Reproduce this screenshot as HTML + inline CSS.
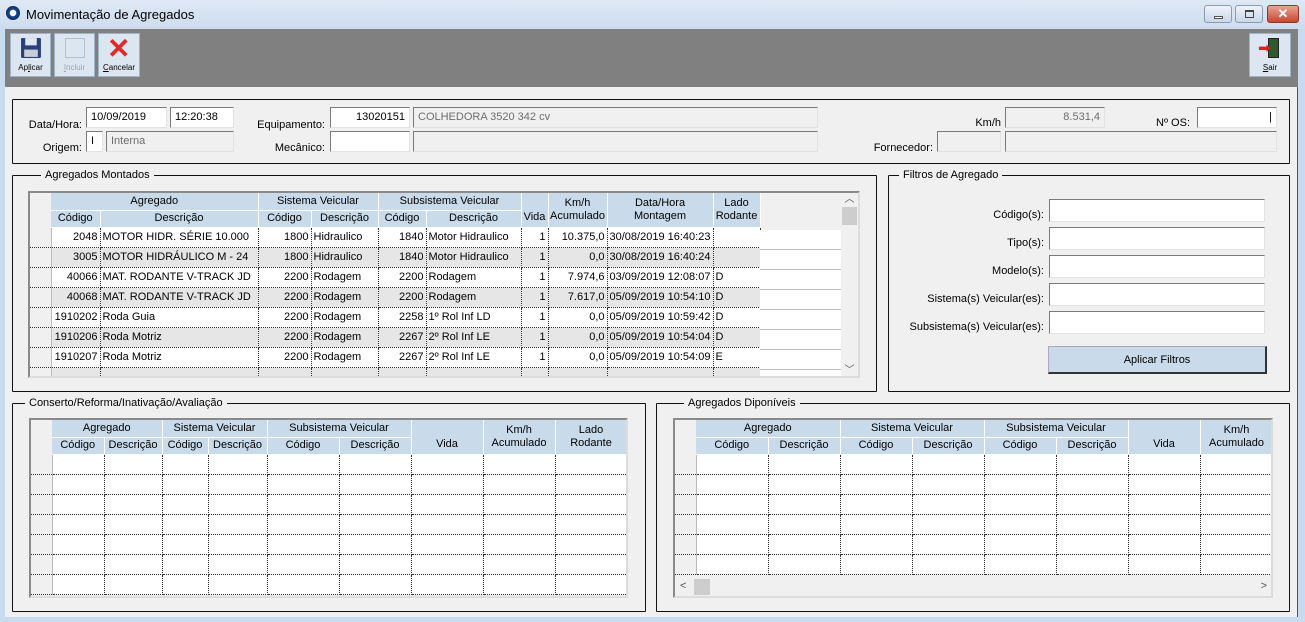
<!DOCTYPE html>
<html><head><meta charset="utf-8">
<style>
*{box-sizing:border-box;margin:0;padding:0}
body{width:1305px;height:622px;overflow:hidden;background:#c9dbee;font-family:"Liberation Sans",Arial,sans-serif;font-size:11px;color:#000;position:relative}
.a{position:absolute}
.title{left:0;top:0;width:1305px;height:29px;background:linear-gradient(#dfe9f5,#cddcee)}
.tb{left:5px;top:29px;width:1293px;height:58px;background:#808080}
.body{left:5px;top:87px;width:1293px;height:530px;background:#f0f0f0;border-right:1px solid #555}
.btn{background:#dce6f0;border:1px solid #9fb4c8;font-size:8px;text-align:center}
.btn span{position:absolute;left:0;right:0;bottom:4px}
.grp{border:1px solid #111;border-radius:1px}
.leg{background:#f0f0f0;padding:0 4px;top:-7px}
.in{background:#fff;border:1px solid #7a7a7a;border-right-color:#e3e3e3;border-bottom-color:#e3e3e3;height:21px;padding:3px 4px;font-size:11px}
.g{background:#f0f0f0;color:#6d6d6d}
.lb{text-align:right}
table{border-collapse:collapse;table-layout:fixed;font-size:11px}
td{height:20px;border-right:1px dotted #333;border-bottom:1px dotted #333;padding:0 2px;white-space:nowrap;overflow:hidden;background:#fff}
td.r{text-align:right}
td.rh{background:#f0f0f0;border-right:1px solid #bbb}
tr.z td{background:#e6e6e6}
tr.z td.rh{background:#f0f0f0}
th{background:#c9dbea;font-weight:normal;height:17px;border-right:1px solid #fff;border-bottom:1px solid #fff;padding:0;white-space:nowrap;overflow:hidden;line-height:13px}
th.rh{background:#f0f0f0;border:none}
.grid{border:2px solid #8a8a8a;border-right-color:#dcdcdc;border-bottom-color:#dcdcdc;overflow:hidden;background:#f0f0f0}
</style></head><body>
<div class="a title"></div>
<div class="a" style="left:6px;top:6px;width:14px;height:14px;border-radius:50%;background:radial-gradient(circle at 50% 50%,#fff 30%,#1c4f8f 35%,#0a2a60 70%)"></div>
<div class="a" style="left:26px;top:7px;font-size:13px">Movimentação de Agregados</div>
<div class="a" style="left:1204px;top:5px;width:28px;height:18px;border:1px solid #8a9ab0;border-radius:3px;background:linear-gradient(#eef3fa,#c9d7e8)"><div class="a" style="left:9px;top:10px;width:9px;height:3px;background:#fff;border:1px solid #555"></div></div>
<div class="a" style="left:1235px;top:5px;width:28px;height:18px;border:1px solid #8a9ab0;border-radius:3px;background:linear-gradient(#eef3fa,#c9d7e8)"><div class="a" style="left:9px;top:4px;width:9px;height:8px;border:1px solid #444;border-top-width:2px"></div></div>
<div class="a" style="left:1267px;top:5px;width:32px;height:18px;border:1px solid #8a3a2a;border-radius:3px;background:linear-gradient(#e8a596,#c8452e);color:#fff;font-weight:bold;text-align:center;line-height:16px;font-size:13px">✕</div>

<div class="a tb"></div>
<div class="a btn" style="left:10px;top:33px;width:41px;height:44px">
<svg class="a" style="left:9px;top:3px" width="22" height="22" viewBox="0 0 21 21"><rect x="1" y="1" width="19" height="19" rx="1" fill="#2b3f7a"/><rect x="5" y="1" width="11" height="7" fill="#dfe6f0"/><rect x="4" y="12" width="13" height="7" fill="#c8cdd6"/></svg><span>Ap<u>l</u>icar</span></div>
<div class="a btn" style="left:54px;top:33px;width:41px;height:44px;color:#9aa">
<div class="a" style="left:10px;top:4px;width:20px;height:20px;border:1px solid #b5c0cc"></div><span><u>I</u>ncluir</span></div>
<div class="a btn" style="left:98px;top:33px;width:42px;height:44px">
<div class="a" style="left:8px;top:1px;font-size:28px;color:#e02828;font-weight:bold;line-height:28px">✕</div><span><u>C</u>ancelar</span></div>
<div class="a btn" style="left:1249px;top:33px;width:42px;height:44px">
<div class="a" style="left:18px;top:4px;width:11px;height:20px;background:#2f5a2a;border:1px solid #222"></div>
<div class="a" style="left:8px;top:9px;font-size:15px;color:#e02020;line-height:12px">➡</div><span><u>S</u>air</span></div>

<div class="a body"></div>

<div class="a grp" style="left:12px;top:99px;width:1278px;height:65px"></div>
<div class="a lb" style="left:20px;top:119px;width:62px">Data/Hora:</div>
<div class="a in" style="left:86px;top:107px;width:81px">10/09/2019</div>
<div class="a in" style="left:170px;top:107px;width:64px">12:20:38</div>
<div class="a lb" style="left:20px;top:142px;width:62px">Origem:</div>
<div class="a in" style="left:86px;top:131px;width:17px">I</div>
<div class="a in g" style="left:106px;top:131px;width:128px">Interna</div>
<div class="a lb" style="left:240px;top:119px;width:85px">Equipamento:</div>
<div class="a in" style="left:330px;top:107px;width:80px;text-align:right">13020151</div>
<div class="a in g" style="left:413px;top:107px;width:405px">COLHEDORA 3520 342 cv</div>
<div class="a lb" style="left:240px;top:142px;width:85px">Mecânico:</div>
<div class="a in" style="left:330px;top:131px;width:80px"></div>
<div class="a in g" style="left:413px;top:131px;width:405px"></div>
<div class="a lb" style="left:950px;top:117px;width:51px">Km/h</div>
<div class="a in g" style="left:1005px;top:107px;width:100px;text-align:right">8.531,4</div>
<div class="a lb" style="left:1130px;top:117px;width:60px">Nº OS:</div>
<div class="a in" style="left:1197px;top:107px;width:80px;text-align:right">|</div>
<div class="a lb" style="left:860px;top:142px;width:73px">Fornecedor:</div>
<div class="a in g" style="left:937px;top:131px;width:64px"></div>
<div class="a in g" style="left:1005px;top:131px;width:272px"></div>

<div class="a grp" style="left:12px;top:175px;width:865px;height:217px"><div class="a leg" style="left:28px">Agregados Montados</div></div>
<div class="a grid" style="left:28px;top:191px;width:832px;height:187px">
<table class="a" style="left:0;top:0;width:730px">
<colgroup><col style="width:21px"><col style="width:49px"><col style="width:158px"><col style="width:53px"><col style="width:67px"><col style="width:48px"><col style="width:95px"><col style="width:27px"><col style="width:59px"><col style="width:106px"><col style="width:47px"></colgroup>
<tr><th class="rh"></th><th colspan="2">Agregado</th><th colspan="2">Sistema Veicular</th><th colspan="2">Subsistema Veicular</th><th rowspan="2" style="vertical-align:bottom;padding-bottom:3px">Vida</th><th rowspan="2">Km/h<br>Acumulado</th><th rowspan="2">Data/Hora<br>Montagem</th><th rowspan="2">Lado<br>Rodante</th></tr>
<tr><th class="rh"></th><th>Código</th><th>Descrição</th><th>Código</th><th>Descrição</th><th>Código</th><th>Descrição</th></tr>
<tr><td class="rh"></td><td class="r">2048</td><td>MOTOR HIDR. SÉRIE 10.000</td><td class="r">1800</td><td>Hidraulico</td><td class="r">1840</td><td>Motor Hidraulico</td><td class="r">1</td><td class="r">10.375,0</td><td>30/08/2019 16:40:23</td><td></td></tr>
<tr class="z"><td class="rh"></td><td class="r">3005</td><td>MOTOR HIDRÁULICO M - 24</td><td class="r">1800</td><td>Hidraulico</td><td class="r">1840</td><td>Motor Hidraulico</td><td class="r">1</td><td class="r">0,0</td><td>30/08/2019 16:40:24</td><td></td></tr>
<tr><td class="rh"></td><td class="r">40066</td><td>MAT. RODANTE V-TRACK JD</td><td class="r">2200</td><td>Rodagem</td><td class="r">2200</td><td>Rodagem</td><td class="r">1</td><td class="r">7.974,6</td><td>03/09/2019 12:08:07</td><td>D</td></tr>
<tr class="z"><td class="rh"></td><td class="r">40068</td><td>MAT. RODANTE V-TRACK JD</td><td class="r">2200</td><td>Rodagem</td><td class="r">2200</td><td>Rodagem</td><td class="r">1</td><td class="r">7.617,0</td><td>05/09/2019 10:54:10</td><td>D</td></tr>
<tr><td class="rh"></td><td class="r">1910202</td><td>Roda Guia</td><td class="r">2200</td><td>Rodagem</td><td class="r">2258</td><td>1º Rol Inf LD</td><td class="r">1</td><td class="r">0,0</td><td>05/09/2019 10:59:42</td><td>D</td></tr>
<tr class="z"><td class="rh"></td><td class="r">1910206</td><td>Roda Motriz</td><td class="r">2200</td><td>Rodagem</td><td class="r">2267</td><td>2º Rol Inf LE</td><td class="r">1</td><td class="r">0,0</td><td>05/09/2019 10:54:04</td><td>D</td></tr>
<tr><td class="rh"></td><td class="r">1910207</td><td>Roda Motriz</td><td class="r">2200</td><td>Rodagem</td><td class="r">2267</td><td>2º Rol Inf LE</td><td class="r">1</td><td class="r">0,0</td><td>05/09/2019 10:54:09</td><td>E</td></tr>
<tr class="z"><td class="rh"></td><td></td><td></td><td></td><td></td><td></td><td></td><td></td><td></td><td></td><td></td></tr>
</table>
<div class="a" style="left:730px;top:37px;width:81px;height:150px;background:#fff"></div>
<div class="a" style="left:730px;top:37px;width:81px;height:140px;background:repeating-linear-gradient(#fff 0 19px,#444 19px 20px);opacity:.35"></div>
<div class="a" style="left:811px;top:0;width:17px;height:185px;background:#f0f0f0;color:#555;text-align:center;font-size:10px"><div style="line-height:14px">︿</div><div style="background:#cdcdcd;height:18px;margin:0 1px"></div><div class="a" style="bottom:2px;left:0;right:0">﹀</div></div>
</div>

<div class="a grp" style="left:888px;top:175px;width:402px;height:217px"><div class="a leg" style="left:10px">Filtros de Agregado</div></div>
<div class="a lb" style="left:890px;top:209px;width:154px">Código(s):</div>
<div class="a in" style="left:1049px;top:199px;width:216px;height:23px"></div>
<div class="a lb" style="left:890px;top:237px;width:154px">Tipo(s):</div>
<div class="a in" style="left:1049px;top:227px;width:216px;height:23px"></div>
<div class="a lb" style="left:890px;top:265px;width:154px">Modelo(s):</div>
<div class="a in" style="left:1049px;top:255px;width:216px;height:23px"></div>
<div class="a lb" style="left:890px;top:293px;width:154px">Sistema(s) Veicular(es):</div>
<div class="a in" style="left:1049px;top:283px;width:216px;height:23px"></div>
<div class="a lb" style="left:890px;top:321px;width:154px">Subsistema(s) Veicular(es):</div>
<div class="a in" style="left:1049px;top:311px;width:216px;height:23px"></div>
<div class="a" style="left:1048px;top:346px;width:219px;height:28px;background:#c9dbea;border:1px solid #aab;border-right:2px solid #333;border-bottom:2px solid #333;text-align:center;line-height:26px">Aplicar Filtros</div>

<div class="a grp" style="left:12px;top:403px;width:634px;height:209px"><div class="a leg" style="left:12px">Conserto/Reforma/Inativação/Avaliação</div></div>
<div class="a grid" style="left:29px;top:418px;width:599px;height:180px">
<table class="a" style="left:0;top:0;width:596px">
<colgroup><col style="width:21px"><col style="width:52px"><col style="width:58px"><col style="width:46px"><col style="width:59px"><col style="width:72px"><col style="width:72px"><col style="width:72px"><col style="width:72px"><col style="width:72px"></colgroup>
<tr><th class="rh"></th><th colspan="2">Agregado</th><th colspan="2">Sistema Veicular</th><th colspan="2">Subsistema Veicular</th><th rowspan="2" style="vertical-align:bottom;padding-bottom:3px">Vida</th><th rowspan="2">Km/h<br>Acumulado</th><th rowspan="2">Lado<br>Rodante</th></tr>
<tr><th class="rh"></th><th>Código</th><th>Descrição</th><th>Código</th><th>Descrição</th><th>Código</th><th>Descrição</th></tr>
<tr><td class="rh"></td><td></td><td></td><td></td><td></td><td></td><td></td><td></td><td></td><td></td></tr>
<tr><td class="rh"></td><td></td><td></td><td></td><td></td><td></td><td></td><td></td><td></td><td></td></tr>
<tr><td class="rh"></td><td></td><td></td><td></td><td></td><td></td><td></td><td></td><td></td><td></td></tr>
<tr><td class="rh"></td><td></td><td></td><td></td><td></td><td></td><td></td><td></td><td></td><td></td></tr>
<tr><td class="rh"></td><td></td><td></td><td></td><td></td><td></td><td></td><td></td><td></td><td></td></tr>
<tr><td class="rh"></td><td></td><td></td><td></td><td></td><td></td><td></td><td></td><td></td><td></td></tr>
<tr><td class="rh"></td><td></td><td></td><td></td><td></td><td></td><td></td><td></td><td></td><td></td></tr>
</table>
</div>

<div class="a grp" style="left:656px;top:403px;width:634px;height:209px"><div class="a leg" style="left:27px">Agregados Diponíveis</div></div>
<div class="a grid" style="left:673px;top:418px;width:600px;height:180px">
<table class="a" style="left:0;top:0;width:598px">
<colgroup><col style="width:21px"><col style="width:72px"><col style="width:72px"><col style="width:72px"><col style="width:72px"><col style="width:72px"><col style="width:72px"><col style="width:72px"><col style="width:73px"></colgroup>
<tr><th class="rh"></th><th colspan="2">Agregado</th><th colspan="2">Sistema Veicular</th><th colspan="2">Subsistema Veicular</th><th rowspan="2" style="vertical-align:bottom;padding-bottom:3px">Vida</th><th rowspan="2">Km/h<br>Acumulado</th></tr>
<tr><th class="rh"></th><th>Código</th><th>Descrição</th><th>Código</th><th>Descrição</th><th>Código</th><th>Descrição</th></tr>
<tr><td class="rh"></td><td></td><td></td><td></td><td></td><td></td><td></td><td></td><td></td></tr>
<tr><td class="rh"></td><td></td><td></td><td></td><td></td><td></td><td></td><td></td><td></td></tr>
<tr><td class="rh"></td><td></td><td></td><td></td><td></td><td></td><td></td><td></td><td></td></tr>
<tr><td class="rh"></td><td></td><td></td><td></td><td></td><td></td><td></td><td></td><td></td></tr>
<tr><td class="rh"></td><td></td><td></td><td></td><td></td><td></td><td></td><td></td><td></td></tr>
<tr><td class="rh"></td><td></td><td></td><td></td><td></td><td></td><td></td><td></td><td></td></tr>
</table>
<div class="a" style="left:0;top:158px;width:598px;height:18px;background:#f0f0f0;color:#555;font-size:11px"><span class="a" style="left:5px;top:2px">&lt;</span><div class="a" style="left:19px;top:1px;width:16px;height:16px;background:#cdcdcd"></div><span class="a" style="right:6px;top:2px">&gt;</span></div>
</div>
</body></html>
